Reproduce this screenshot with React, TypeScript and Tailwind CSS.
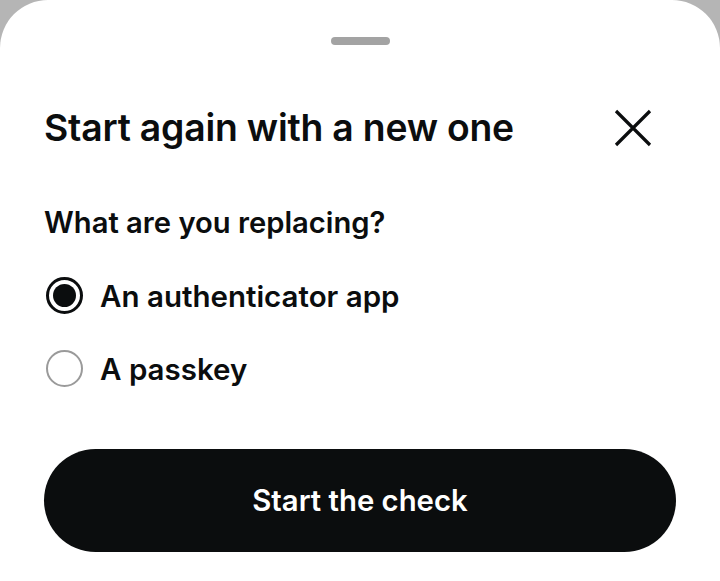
import { useState } from "react";

const options = ["An authenticator app", "A passkey"];

function Radio({ checked }: { checked: boolean }) {
  return checked ? (
    <span className="flex h-[37px] w-[37px] items-center justify-center rounded-full border-[3px] border-[#0b0d0e]">
      <span className="h-[23px] w-[23px] rounded-full bg-[#0b0d0e]" />
    </span>
  ) : (
    <span className="h-[37px] w-[37px] rounded-full border-2 border-[#9a9a9a]" />
  );
}

export default function App() {
  const [selected, setSelected] = useState(0);

  return (
    <div className="h-[581px] w-[720px] overflow-hidden bg-[#b5b5b5] font-['Inter',sans-serif] text-[#0b0d0e]">
      <div className="h-full rounded-t-[48px] bg-white px-[44px]">
        <div className="flex justify-center pt-[37px]">
          <div className="h-[8px] w-[59px] rounded-full bg-[#a3a3a3]" />
        </div>

        <div className="mt-[60px] flex items-center justify-between">
          <h2 className="text-[37.3px] font-semibold leading-[40px] tracking-[-0.2px]">
            Start again with a new one
          </h2>
          <button className="mr-[20px] p-1" aria-label="Close">
            <svg width="38" height="38" viewBox="0 0 38 38" fill="none">
              <path d="M2 2L36 36M36 2L2 36" stroke="#0b0d0e" strokeWidth="3.2" />
            </svg>
          </button>
        </div>

        <p className="mt-[55px] text-[29.2px] font-semibold leading-[34px]">
          What are you replacing?
        </p>

        <div className="mt-[37px] flex flex-col gap-[36px]">
          {options.map((label, i) => (
            <button
              key={label}
              onClick={() => setSelected(i)}
              className="flex items-center gap-[17px] pl-[2px] text-left"
            >
              <Radio checked={selected === i} />
              <span className="text-[29.5px] font-semibold leading-[36px]">{label}</span>
            </button>
          ))}
        </div>

        <button className="mt-[62px] flex h-[103px] w-full items-center justify-center rounded-full bg-[#0b0d0e] text-[29.3px] font-semibold text-white">
          Start the check
        </button>
      </div>
    </div>
  );
}
